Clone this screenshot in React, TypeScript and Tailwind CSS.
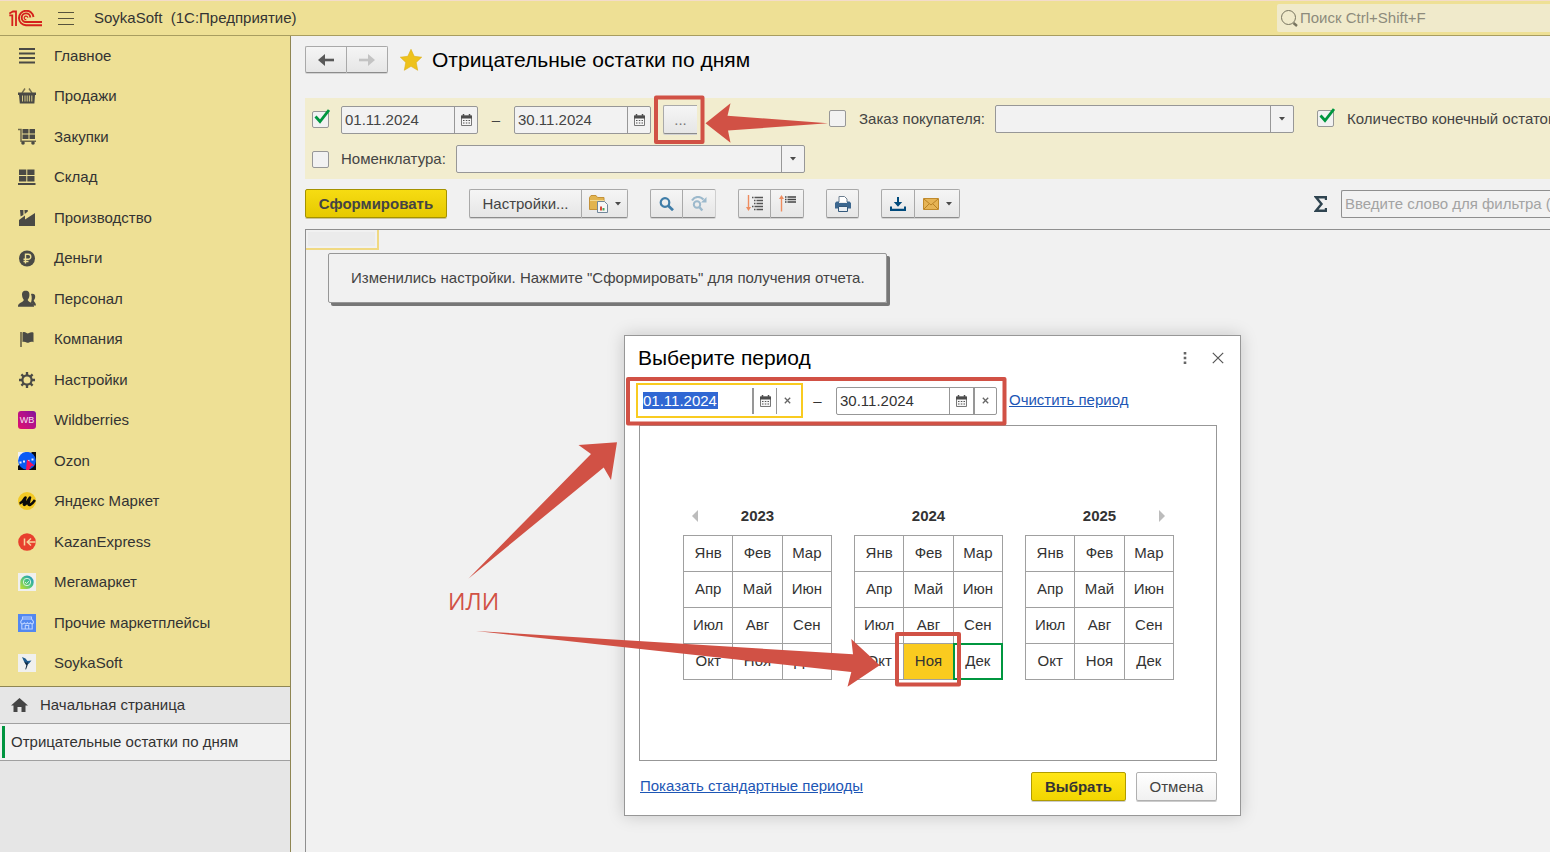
import React, { useState } from 'react';

const MONTHS = [
  ['Янв', 'Фев', 'Мар'],
  ['Апр', 'Май', 'Июн'],
  ['Июл', 'Авг', 'Сен'],
  ['Окт', 'Ноя', 'Дек'],
];

const buttonLook =
  'flex items-center justify-center border border-[#a9a9a9] border-b-[#8c8c8c] bg-linear-to-b from-[#f5f5f5] to-[#e6e6e6] shadow-[0_1px_0_#d2d2d2]';

function Svg({ w, h, children }: { w: number; h: number; children: React.ReactNode }) {
  return (
    <svg width={w} height={h} viewBox={`0 0 ${w} ${h}`} fill="none" className="shrink-0" aria-hidden="true">
      {children}
    </svg>
  );
}

// Sidebar sections, every icon is drawn on an 18x18 grid
const SECTIONS: { title: string; icon: React.ReactNode }[] = [
  {
    title: 'Главное',
    icon: <path d="M1 2h16M1 6.500h16M1 11h16M1 15.500h16" stroke="#4a4a45" strokeWidth="2" />,
  },
  {
    title: 'Продажи',
    icon: (
      <>
        <path d="M4 6l3-4.500M14 6l-3-4.500" stroke="#77704f" strokeWidth="1.4" />
        <path d="M0 5.500h18v2.500h-1l-.6 8.500H1.800L1 8H0z" fill="#4a4a45" />
        <path d="M4.500 8.500v6M7 8.500v6M9.200 8.500v6M11.400 8.500v6M13.800 8.500v6" stroke="#d6ca88" strokeWidth="1" />
      </>
    ),
  },
  {
    title: 'Закупки',
    icon: (
      <>
        <path d="M0 1.500h3v11.800h15" stroke="#6d674b" strokeWidth="1.500" />
        <path d="M4.500 1h6v4.500h-6zM11.500 1H17v4.500h-5.500zM4.500 6.500h6V11h-6zM11.500 6.500H17V11h-5.500z" fill="#4a4a45" />
        <circle cx="5" cy="15" r="1.800" fill="#4a4a45" />
        <circle cx="15" cy="15" r="1.800" fill="#4a4a45" />
      </>
    ),
  },
  {
    title: 'Склад',
    icon: <path d="M1 1.500h7.300v5.500H1zM9.300 1.500h7.200v5.500H9.300zM1 8h7.300v5.500H1zM9.300 8h7.200v5.500H9.300zM0 15h17.500v2H0z" fill="#4a4a45" />,
  },
  {
    title: 'Производство',
    icon: <path d="M1 17V11l6-4.500v4l10-6.500v13zM2 1h3.400v5L2.600 7.500zM6.400 1h3.400v1.500l-3 2.500z" fill="#4a4a45" />,
  },
  {
    title: 'Деньги',
    icon: (
      <>
        <circle cx="9" cy="9.500" r="8" fill="#4a4a45" />
        <path d="M7.500 14.500V5.300h2.800a2.500 2.500 0 0 1 0 5H5.500M5.500 12.500h5" stroke="#eee095" strokeWidth="1.400" />
      </>
    ),
  },
  {
    title: 'Персонал',
    icon: (
      <>
        <path d="M13 4c2.500-.8 4.300.3 4.200 2.700-.1 1.700-.8 3-1.500 3.600.2 1.600 2.300 2.700 2.300 5.200h-2.500c-.4-1.400-1.700-2.200-2.600-2.800.9-2.500 1.300-5.500.1-8.700z" fill="#4a4a45" />
        <path d="M7.700.8c3 0 4 2 3.700 4.600-.2 2-.9 3.400-1.700 4.300-.1 2.500 6.300 2.800 6.300 6.300v.7H0V16c0-3.500 6-3.800 5.800-6.300C5 8.800 4.300 7.400 4.100 5.400 3.800 2.800 4.700.8 7.700.8z" fill="#4a4a45" />
      </>
    ),
  },
  {
    title: 'Компания',
    icon: (
      <>
        <path d="M3 2v15" stroke="#77704f" strokeWidth="1.800" />
        <path d="M4.500 2.500c3-1.500 4 1.500 6 .8 1.500-.5 3-1.500 5-.5v9.500c-2-1-3.500 0-5 .5-2 .5-3-1.800-6-.8z" fill="#4a4a45" />
      </>
    ),
  },
  {
    title: 'Настройки',
    icon: (
      <>
        <path d="M9 1v3M9 14v3M1 9h3M14 9h3M3.400 3.400l2 2M12.600 12.600l2 2M3.400 14.600l2-2M12.600 5.400l2-2" stroke="#4a4a45" strokeWidth="2.300" />
        <circle cx="9" cy="9" r="4.600" stroke="#4a4a45" strokeWidth="2.200" />
      </>
    ),
  },
  {
    title: 'Wildberries',
    icon: (
      <>
        <defs>
          <linearGradient id="wb" x1="0" y1="1" x2="1" y2="0">
            <stop offset="0" stopColor="#e0106e" />
            <stop offset="0.600" stopColor="#b0128c" />
            <stop offset="1" stopColor="#7d129c" />
          </linearGradient>
        </defs>
        <rect width="18" height="18" rx="3" fill="url(#wb)" />
        <text x="9" y="12" textAnchor="middle" fontSize="9" fontFamily="Liberation Sans, sans-serif" fill="#f6e3f2">WB</text>
      </>
    ),
  },
  {
    title: 'Ozon',
    icon: (
      <>
        <path d="M0 0h10L0 10z" fill="#f2f2f2" />
        <path d="M18 0v18H0v-4l14-14z" fill="#0a0a10" />
        <circle cx="9" cy="8.800" r="8.900" fill="#0a5bf5" />
        <path d="M1.500 10.500h2M5 9.500h2M9.500 9l2-.5M13.500 7.500h2" stroke="#e6eeff" strokeWidth="1.800" />
        <path d="M8 18l1-10.500 7.500 6-3 .5-2.500 4z" fill="#f5145a" />
      </>
    ),
  },
  {
    title: 'Яндекс Маркет',
    icon: (
      <>
        <circle cx="9" cy="9" r="9" fill="#f3c924" />
        <path d="M1.500 11.500C5 11 5.500 7 7.500 5.500L6 11.500C5.500 13.500 7 13 8 11.500l4-6-1.500 6c-.5 2.500 3 2 6.500-3.500" stroke="#0a0a0a" strokeWidth="2.600" strokeLinejoin="round" />
      </>
    ),
  },
  {
    title: 'KazanExpress',
    icon: (
      <>
        <circle cx="9" cy="9" r="8.800" fill="#e8402e" />
        <path d="M6.500 5.500v7M17.500 9H10M13 5.500L9.300 9l3.700 3.500" stroke="#f6d5a0" strokeWidth="1.500" />
      </>
    ),
  },
  {
    title: 'Мегамаркет',
    icon: (
      <>
        <defs>
          <linearGradient id="mega" x1="0" y1="1" x2="1" y2="0">
            <stop offset="0" stopColor="#c9e02e" />
            <stop offset="0.500" stopColor="#4cc47e" />
            <stop offset="1" stopColor="#1a8fd0" />
          </linearGradient>
        </defs>
        <path d="M0 0h18v18H0z" fill="#f0f0ee" />
        <path d="M9 2.500a6.700 6.700 0 1 1 0 13.400H2.300V9.200A6.700 6.700 0 0 1 9 2.500z" fill="url(#mega)" />
        <circle cx="9" cy="9" r="3.700" stroke="#d8f2e0" strokeWidth="1" />
        <path d="M7 9l1.500 1.500L11.200 8" stroke="#d8f2e0" strokeWidth="1" />
      </>
    ),
  },
  {
    title: 'Прочие маркетплейсы',
    icon: (
      <>
        <path d="M0 0h18v18H0z" fill="#5288f0" />
        <path d="M4.500 3h9v2h-9zM4.500 5L2.800 7.500v1.300c1.500 1.600 2.700 1.300 3.600 0 1.200 1.400 2.200 1.400 3 0 1 1.400 2 1.400 3 0 1 1.300 2 1.300 3 0V7.500L13.500 5M3.800 9.800V15h10.400V9.800M7.300 15v-3.500h3.400V15" stroke="#bcd2ff" strokeWidth="1.100" />
      </>
    ),
  },
  {
    title: 'SoykaSoft',
    icon: (
      <>
        <path d="M0 0h18v18H0z" fill="#f0f0ee" />
        <path d="M4 3l3.500 1.500L9.500 7l4-.5-2.500 3-2 1.500L6 7.500z" fill="#1f5b8e" />
        <path d="M6 7.500l3 1.500 1-1.500-.5 4-1.500 4-.7-.3 1-3.700z" fill="#12283f" />
      </>
    ),
  },
];

function CalendarIcon() {
  return (
    <Svg w={11} h={12}>
      <path d="M2.500 0v2M8.500 0v2" stroke="#4d4d4d" strokeWidth="1.500" />
      <path d="M.5 2h10v9.500H.5z" stroke="#777" fill="#f6f6f6" />
      <path d="M0 1.500h11V4.500H0z" fill="#4d4d4d" />
      <path d="M2 6.500h1.500M4.800 6.500h1.500M7.500 6.500H9M2 9h1.500M4.800 9h1.500M7.500 9H9" stroke="#555" strokeWidth="1.200" />
    </Svg>
  );
}

function CrossIcon() {
  return (
    <Svg w={7} h={7}>
      <path d="M.8.8l5.400 5.400M6.200.8L.8 6.200" stroke="#666" strokeWidth="1.300" />
    </Svg>
  );
}

function Caret() {
  return (
    <Svg w={6} h={4}>
      <path d="M0 0h6L3 3.600z" fill="#4a4a4a" />
    </Svg>
  );
}

function Tick({ id, on, label }: { id: string; on?: boolean; label: string }) {
  return (
    <span className="relative block size-[17px] shrink-0">
      <input
        id={id}
        type="checkbox"
        aria-label={label}
        defaultChecked={on}
        className="peer block size-[17px] appearance-none rounded-xs border border-[#979797] bg-[#f2f2f2]"
      />
      <svg viewBox="0 0 18 18" fill="none" className="pointer-events-none absolute -top-[3px] left-0 hidden size-[18px] peer-checked:block" aria-hidden="true">
        <path d="M3.500 8.500l4.500 5L17 2" stroke="#00963f" strokeWidth="2.800" />
      </svg>
    </span>
  );
}

function DateField({ label, value }: { label: string; value: string }) {
  return (
    <span className="flex h-7 w-[137px] shrink-0 rounded-xs border border-[#979797] bg-[#f2f2f2]">
      <input aria-label={label} defaultValue={value} className="w-full min-w-0 px-[3px] outline-none" />
      <button aria-label="Календарь" className="flex w-[23px] shrink-0 items-center justify-center border-l border-[#979797]">
        <CalendarIcon />
      </button>
    </span>
  );
}

function Combo({ id, className }: { id: string; className: string }) {
  return (
    <span className={`relative flex h-7 shrink-0 rounded-xs border border-[#979797] bg-[#f2f2f2] ${className}`}>
      <select id={id} className="w-full appearance-none px-1 outline-none">
        <option></option>
      </select>
      <span className="pointer-events-none absolute inset-y-0 right-0 flex w-[23px] items-center justify-center border-l border-[#979797]">
        <Caret />
      </span>
    </span>
  );
}

function Header() {
  return (
    <header className="flex h-9 shrink-0 items-center border-t border-b border-t-[#f3dccb] border-b-[#a89d60] bg-[#eee095] pl-[9px]">
      <Svg w={33} h={17}>
        <path d="M.3 5.300h3V16M.3 3.500L4 1.500h3V16" stroke="#d5201c" strokeWidth="1.800" />
        <path d="M24.500 7A7.300 7.300 0 1 0 17 15.300h16" stroke="#d5201c" strokeWidth="1.900" />
        <path d="M21.300 7.500A4.300 4.300 0 1 0 17 12h16" stroke="#d5201c" strokeWidth="1.900" />
        <path d="M18.800 7.700a1.800 1.800 0 1 0-1.500 2" stroke="#d5201c" strokeWidth="1.200" />
      </Svg>
      <button aria-label="Меню" className="mx-4">
        <Svg w={16} h={14}>
          <path d="M0 1.500h16M0 7.500h16M0 13.500h16" stroke="#57533c" />
        </Svg>
      </button>
      <span className="ml-1 whitespace-pre">SoykaSoft  (1С:Предприятие)</span>
      <label className="ml-auto flex h-7 w-[273px] items-center rounded-l-xs bg-[#f0eacb] pl-1">
        <Svg w={17} h={18}>
          <circle cx="7.500" cy="8.500" r="7" stroke="#77745f" />
          <path d="M12.500 14l3.500 3" stroke="#77745f" strokeWidth="2.400" />
        </Svg>
        <input aria-label="Поиск" placeholder="Поиск Ctrl+Shift+F" className="ml-0.5 w-full outline-none placeholder:text-[#8d8b7c]" />
      </label>
    </header>
  );
}

function Sidebar() {
  return (
    <aside className="flex w-[291px] shrink-0 flex-col border-r border-[#8f8653] bg-[#e6e6e6]">
      <nav className="border-b border-[#8f8653] bg-[#eee095] pb-0.5">
        {SECTIONS.map((s) => (
          <a key={s.title} href="#" className="flex items-center gap-[18px] pl-[18px] odd:h-10 even:h-[41px] even:pb-px">
            <Svg w={18} h={18}>{s.icon}</Svg>
            {s.title}
          </a>
        ))}
      </nav>
      <a href="#" className="flex h-[37px] items-center gap-3 border-b border-[#a0a0a0] pl-[11px]">
        <Svg w={17} h={14}>
          <path d="M8.500 0L17 7.500h-2.500V14h-4V9h-4v5h-4V7.500H0z" fill="#454545" />
        </Svg>
        Начальная страница
      </a>
      <a href="#" className="flex h-[37px] items-center border-b border-[#a0a0a0] bg-[#f2f2f2] pl-0.5">
        <span className="mr-1.5 h-8 w-[3px] bg-[#00943f]" />
        Отрицательные остатки по дням
      </a>
    </aside>
  );
}

function Toolbar() {
  return (
    <div className="mt-2.5 flex h-[29px] shrink-0 items-center">
      <button className="h-[29px] w-[142px] shrink-0 rounded-xs border border-[#a59200] bg-linear-to-b from-[#f6dc12] to-[#e6c900] font-bold shadow-[0_1px_0_#c9c29a]">
        Сформировать
      </button>
      <div className="ml-[22px] flex h-[29px] shrink-0">
        <button className={`${buttonLook} w-28 rounded-l-xs border-r-0`}>Настройки...</button>
        <button aria-label="Варианты отчета" className={`${buttonLook} w-[47px] gap-[7px] rounded-r-xs`}>
          <Svg w={19} h={18}>
            <path d="M.5 2.500L2 .5h5l1.500 2H15v12H.5z" fill="#e2b44f" stroke="#c4923a" />
            <path d="M1 5.500h14" stroke="#f3d891" />
            <path d="M8.500 6.500h7l3 3v8h-10z" fill="#f7f7f7" stroke="#71879a" />
            <path d="M12 15.500v-4" stroke="#d84a3a" strokeWidth="2" />
            <path d="M14.500 15.500V13" stroke="#4ba85b" strokeWidth="2" />
          </Svg>
          <Caret />
        </button>
      </div>
      <div className="ml-[22px] flex h-[29px] shrink-0">
        <button aria-label="Найти" className={`${buttonLook} w-8 rounded-l-xs border-r-0`}>
          <Svg w={15} h={14}>
            <circle cx="6" cy="5.500" r="4.300" stroke="#3f7da8" strokeWidth="2.200" />
            <path d="M9 8.500l5 4.700" stroke="#3f7da8" strokeWidth="2.800" />
          </Svg>
        </button>
        <button aria-label="Найти далее" className={`${buttonLook} w-[34px] rounded-r-xs border-r-[#cfcfcf]`}>
          <Svg w={16} h={16}>
            <path d="M1 4.500C4 0 9 0 12.500 3.500" stroke="#9cb9cc" strokeWidth="2.200" />
            <path d="M15.500 1v5.500H10z" fill="#9cb9cc" />
            <circle cx="6" cy="8.500" r="3.200" stroke="#9cb9cc" strokeWidth="2" />
            <path d="M8.300 11l3 3.500" stroke="#9cb9cc" strokeWidth="2.400" />
          </Svg>
        </button>
      </div>
      <div className="ml-[22px] flex h-[29px] shrink-0">
        <button aria-label="Развернуть группы" className={`${buttonLook} w-8 rounded-l-xs border-r-0`}>
          <Svg w={17} h={17}>
            <path d="M2.500 0v13" stroke="#ee8c5f" strokeWidth="1.400" />
            <path d="M0 12h5l-2.500 4z" fill="#ee8c5f" />
            <path d="M6 2.500h11M8 5.500h9M8 8.500h9M6 11.500h11M8 14.500h9" stroke="#555" strokeWidth="1.400" strokeDasharray="1.500 1 20" />
          </Svg>
        </button>
        <button aria-label="Свернуть группы" className={`${buttonLook} w-[34px] rounded-r-xs`}>
          <Svg w={17} h={17}>
            <path d="M2.500 3v13.500" stroke="#ee8c5f" strokeWidth="1.400" />
            <path d="M0 4h5L2.500 0z" fill="#ee8c5f" />
            <path d="M6 2h11M6 4.500h11M6 7h11" stroke="#444" strokeWidth="1.400" strokeDasharray="1.500 1 20" />
          </Svg>
        </button>
      </div>
      <button aria-label="Печать" className={`${buttonLook} ml-[22px] h-[29px] w-[33px] shrink-0 rounded-xs`}>
        <Svg w={16} h={16}>
          <path d="M4 6V.5h5.500L12 3v3" fill="#fff" stroke="#6d7f90" />
          <path d="M1.500 5.500H4V7h8V5.500h2.500L16 7v5.500H0V7z" fill="#3c678f" />
          <path d="M3.500 10.500h9v5h-9z" fill="#e9eef2" stroke="#34597c" />
        </Svg>
      </button>
      <div className="ml-[22px] flex h-[29px] shrink-0">
        <button aria-label="Сохранить" className={`${buttonLook} w-[33px] rounded-l-xs border-r-0`}>
          <Svg w={16} h={14}>
            <path d="M8 0v6" stroke="#004a7c" strokeWidth="2" />
            <path d="M3.800 5h8.400L8 9.800zM0 9.500h2v2.200h12V9.500h2V14H0z" fill="#004a7c" />
          </Svg>
        </button>
        <button aria-label="Отправить" className={`${buttonLook} w-[46px] gap-[7px] rounded-r-xs`}>
          <Svg w={16} h={12}>
            <path d="M.5.5h15v11H.5z" fill="#e6b455" stroke="#c08a2c" />
            <path d="M1 1l7 6 7-6M1 11l5-5M15 11l-5-5" stroke="#b98225" strokeWidth="1" />
          </Svg>
          <Caret />
        </button>
      </div>
      <button aria-label="Сумма" className="ml-auto flex shrink-0">
        <Svg w={13} h={16}>
          <path d="M12 4V1.300H2L7.500 8 2 14.700h10V12" stroke="#2f4450" strokeWidth="2.400" />
        </Svg>
      </button>
      {/* the filter box goes past the right edge of the window */}
      <input
        aria-label="Фильтр"
        placeholder="Введите слово для фильтра ("
        className="ml-3.5 h-7 w-[209px] shrink-0 rounded-l-xs border border-r-0 border-[#8f8f8f] bg-[#f2f2f2] pl-[3px] outline-none placeholder:text-[#a3a3a3]"
      />
    </div>
  );
}

function Report() {
  return (
    <main className="flex min-w-0 flex-1 flex-col overflow-hidden bg-[#f1f1f1] pl-3.5 text-[#444]">
      <div className="mt-[9px] flex h-[29px] shrink-0 items-center">
        <button aria-label="Назад" className={`${buttonLook} h-[27px] w-[41px] rounded-l-xs border-r-0`}>
          <Svg w={16} h={12}>
            <path d="M4 6h12" stroke="#585858" strokeWidth="2.600" />
            <path d="M7 0v12L0 6z" fill="#585858" />
          </Svg>
        </button>
        <button aria-label="Вперед" className={`${buttonLook} h-[27px] w-[42px] rounded-r-xs`}>
          <Svg w={16} h={12}>
            <path d="M0 6h12" stroke="#c3c3c3" strokeWidth="2.600" />
            <path d="M9 0v12l7-6z" fill="#c3c3c3" />
          </Svg>
        </button>
        <span className="mr-2.5 ml-3">
          <Svg w={22} h={22}>
            <path d="M11 .3l3.200 7 7.500.9-5.500 5.200 1.500 7.900-6.700-4-6.700 4 1.500-7.900L.3 8.200l7.500-.9z" fill="#eec21c" stroke="#dcae18" strokeWidth=".6" />
          </Svg>
        </span>
        <h1 className="text-[21px] whitespace-nowrap text-black">Отрицательные остатки по дням</h1>
      </div>

      <div className="mt-6 flex h-[81px] shrink-0 flex-col gap-[11px] bg-[#f2edcf] pt-[7px] pl-[7px]">
        <div className="flex h-[29px] items-center">
          <Tick id="period" on label="Период" />
          <span className="ml-3 flex items-center">
            <DateField label="Начало периода" value="01.11.2024" />
            <span className="w-9 text-center">–</span>
            <DateField label="Конец периода" value="30.11.2024" />
          </span>
          <button className={`${buttonLook} ml-3 h-[29px] w-[34px] shrink-0 rounded-l-xs border-r-0 text-[#777]`}>...</button>
          <span className="ml-[132px] flex shrink-0 items-center pb-0.5">
            <Tick id="order-on" label="Отбор по заказу покупателя" />
            <label htmlFor="order" className="ml-[13px] w-[136px] whitespace-nowrap">Заказ покупателя:</label>
            <Combo id="order" className="w-[299px]" />
          </span>
          <span className="ml-[23px] flex shrink-0 items-center pb-0.5">
            <Tick id="stock" on label="Количество конечный остаток" />
            <label htmlFor="stock" className="ml-[13px] whitespace-nowrap">Количество конечный остаток</label>
          </span>
        </div>
        <div className="flex h-7 items-center">
          <Tick id="item-on" label="Отбор по номенклатуре" />
          <label htmlFor="item" className="ml-3 w-[115px]">Номенклатура:</label>
          <Combo id="item" className="w-[349px]" />
        </div>
      </div>

      <Toolbar />

      <section className="mt-[11px] flex-1 border-t border-l border-[#8f8f8f]">
        <div className="h-5 w-[73px] border-r-2 border-b-2 border-[#f0d982] p-0.5">
          <div className="h-full bg-[#ebebeb]" />
        </div>
        <p className="mt-[3px] ml-[22px] flex h-[50px] w-[559px] items-center rounded-xs border border-[#979797] pl-[22px] whitespace-nowrap shadow-[3px_3px_0_#777]">
          Изменились настройки. Нажмите "Сформировать" для получения отчета.
        </p>
      </section>
    </main>
  );
}

interface YearProps {
  year: number;
  picked: string;
  onPick: (key: string) => void;
  prev?: boolean;
  next?: boolean;
}

function Year({ year, picked, onPick, prev, next }: YearProps) {
  return (
    <div className="w-[149px]">
      <div className="grid h-[38px] grid-cols-[24px_1fr_24px] items-center text-center font-bold">
        <span className="flex justify-center">
          {prev && (
            <button aria-label="Предыдущий год">
              <Svg w={6} h={12}>
                <path d="M6 0v12L0 6z" fill="#bcbcbc" />
              </Svg>
            </button>
          )}
        </span>
        <span>{year}</span>
        <span className="flex justify-center">
          {next && (
            <button aria-label="Следующий год">
              <Svg w={6} h={12}>
                <path d="M0 0v12l6-6z" fill="#bcbcbc" />
              </Svg>
            </button>
          )}
        </span>
      </div>
      <table className="w-full table-fixed border-collapse">
        <tbody>
          {MONTHS.map((row) => (
            <tr key={row[0]}>
              {row.map((m) => {
                const key = `${year}-${m}`;
                let look = '';
                if (key === picked) look = 'bg-[#facb1f]';
                else if (key === '2024-Дек') look = 'outline-2 -outline-offset-1 outline-[#00963f]';
                return (
                  <td key={m} className="border border-[#a0a0a0] p-0">
                    <button onClick={() => onPick(key)} className={`block h-[35px] w-full pb-0.5 ${look}`}>{m}</button>
                  </td>
                );
              })}
            </tr>
          ))}
        </tbody>
      </table>
    </div>
  );
}

function PeriodDialog() {
  const [picked, setPicked] = useState('2024-Ноя');

  return (
    <div role="dialog" aria-label="Выберите период" className="absolute top-[335px] left-[624px] w-[617px] border border-[#979797] bg-white shadow-[0_0_16px_rgba(0,0,0,0.18)]">
      <div className="flex h-11 items-center pr-[11px] pl-[13px]">
        <h2 className="mr-auto text-[21px] text-black">Выберите период</h2>
        <button aria-label="Еще" className="mr-[11px] flex w-[22px] justify-center">
          <Svg w={4} h={12}>
            <path d="M.7 0h2.600v2.600H.7zM.7 4.700h2.600v2.600H.7zM.7 9.400h2.600V12H.7z" fill="#666" />
          </Svg>
        </button>
        <button aria-label="Закрыть" className="flex w-[22px] justify-center">
          <Svg w={12} h={12}>
            <path d="M.8.8l10.400 10.400M11.200.8L.8 11.200" stroke="#555" strokeWidth="1.200" />
          </Svg>
        </button>
      </div>

      <div className="mt-[3px] ml-[11px] flex h-[35px] items-center">
        <div className="flex h-[35px] w-[167px] items-center border-2 border-[#f9cb20] pl-[5px]">
          <input aria-label="Начало" defaultValue="01.11.2024" className="h-[17px] w-[75px] bg-[#3067d3] text-white outline-none" />
          <button aria-label="Календарь" className="ml-auto flex h-[26px] w-[25px] items-center justify-center border-r border-l-2 border-[#979797]">
            <CalendarIcon />
          </button>
          <button aria-label="Очистить" className="flex w-6 justify-center pr-1">
            <CrossIcon />
          </button>
        </div>
        <span className="w-[33px] pr-1 text-center">–</span>
        <div className="flex h-7 w-[161px] rounded-xs border border-[#979797]">
          <input aria-label="Конец" defaultValue="30.11.2024" className="w-full min-w-0 px-[3px] outline-none" />
          <button aria-label="Календарь" className="flex w-6 shrink-0 items-center justify-center border-l border-[#979797]">
            <CalendarIcon />
          </button>
          <button aria-label="Очистить" className="flex w-[23px] shrink-0 items-center justify-center border-l-2 border-[#979797]">
            <CrossIcon />
          </button>
        </div>
        <a href="#" className="ml-3 pb-0.5 text-[#1d56b5] underline">Очистить период</a>
      </div>

      <div className="mt-[7px] mr-[23px] ml-3.5 flex h-[336px] gap-[22px] border border-[#979797] pt-[71px] pl-[43px]">
        <Year year={2023} picked={picked} onPick={setPicked} prev />
        <Year year={2024} picked={picked} onPick={setPicked} />
        <Year year={2025} picked={picked} onPick={setPicked} next />
      </div>

      <div className="mt-[11px] mr-[23px] mb-3.5 ml-[15px] flex h-[29px] items-center gap-2.5">
        <a href="#" className="mr-auto pb-0.5 text-[#1d56b5] underline">Показать стандартные периоды</a>
        <button className="h-[29px] w-[95px] rounded-xs border border-[#b09c00] bg-linear-to-b from-[#ffe616] to-[#f2d500] font-bold shadow-[0_1px_0_#ccc]">
          Выбрать
        </button>
        <button className="h-[29px] w-[81px] rounded-xs border border-[#b0b0b0] bg-linear-to-b from-white to-[#f1f1f1] text-[#444] shadow-[0_1px_0_#ccc]">
          Отмена
        </button>
      </div>
    </div>
  );
}

// Red hints drawn over the windows
function Hints() {
  return (
    <>
      <svg viewBox="0 0 1550 852" fill="none" className="pointer-events-none absolute top-0 left-0 h-[852px] w-[1550px]" aria-hidden="true">
        <g stroke="#d15145" strokeWidth="4" strokeLinejoin="round">
          <path d="M656 97.500h46.500v44.500H656z" />
          <path d="M628 379h376.500v44.500H628z" />
          <path d="M897 634h62v50.500h-62z" />
        </g>
        <g fill="#d15145">
          <path d="M705.500 123.300L730.500 103.300 727.500 115.700 828 123.300 728 130.500 730.500 142.800z" />
          <path d="M617 442.300L578.500 445 591 454 468.300 578.700 603.700 467.500 611 480z" />
          <path d="M879.700 665.300L851.300 639 853 654.300 476 631 851.300 672 847.500 686.700z" />
        </g>
      </svg>
      <span className="absolute top-[585px] left-[448px] font-['Open_Sans',sans-serif] text-[23px] leading-8 font-medium text-[#d15145]">ИЛИ</span>
    </>
  );
}

export default function App() {
  return (
    <div className="relative flex h-screen flex-col overflow-hidden font-['Liberation_Sans',Arial,sans-serif] text-[15px] leading-5 text-[#333]">
      <Header />
      <div className="flex min-h-0 flex-1">
        <Sidebar />
        <Report />
      </div>
      <PeriodDialog />
      <Hints />
    </div>
  );
}
